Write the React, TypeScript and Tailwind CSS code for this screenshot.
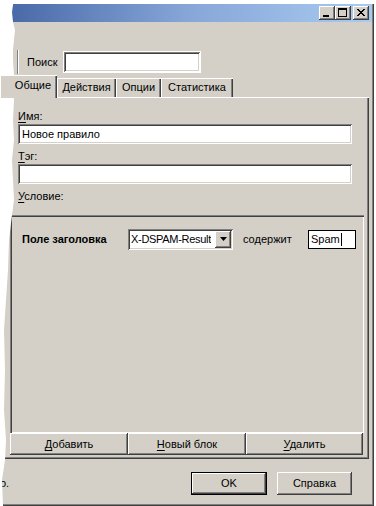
const raised =
  "shadow-[inset_-1px_-1px_#404040,inset_1px_1px_#ffffff,inset_-2px_-2px_#808080]";
const sunken =
  "shadow-[inset_1px_1px_#808080,inset_-1px_-1px_#ffffff,inset_2px_2px_#404040,inset_-2px_-2px_#d4d0c8]";

const CapButton = ({ children }: { children: React.ReactNode }) => (
  <div className={`w-[16px] h-[14px] bg-[#d4d0c8] flex items-center justify-center ${raised}`}>
    {children}
  </div>
);

const Tab = ({ label, w, active }: { label: string; w: string; active?: boolean }) => (
  <div
    className={
      active
        ? `relative z-10 -mb-[1px] h-[23px] ${w} bg-[#d4d0c8] flex items-center justify-end pr-[6px] pb-[2px] shadow-[inset_1px_1px_#ffffff,inset_-1px_0_#404040,inset_-2px_0_#808080]`
        : `h-[19px] ${w} bg-[#d4d0c8] flex items-center justify-center shadow-[inset_1px_1px_#ffffff,inset_-1px_0_#404040,inset_-2px_0_#808080]`
    }
  >
    {label}
  </div>
);

const Label = ({ first, rest }: { first: string; rest: string }) => (
  <div className="h-[13px] leading-[13px] ml-[18px]">
    <span className="underline underline-offset-2">{first}</span>
    {rest}
  </div>
);

const BarButton = ({ first, rest, w }: { first: string; rest: string; w: string }) => (
  <div className={`h-[22px] ${w} bg-[#d4d0c8] flex items-center justify-center ${raised}`}>
    <span>
      <span className="underline underline-offset-2">{first}</span>
      {rest}
    </span>
  </div>
);

export default function App() {
  return (
    <div className="relative w-[376px] h-[506px] bg-white overflow-hidden font-['Liberation_Sans',sans-serif] text-[11px] text-black">
      <div className="mt-[4px] w-[374px] h-[502px] bg-[#d4d0c8] flex flex-col shadow-[inset_-1px_-1px_#404040,inset_-2px_-2px_#808080]">
        {/* title bar */}
        <div className="h-[18px] w-[372px] bg-gradient-to-r from-[#4566a4] via-[#86a6d8] to-[#a8cbf0] flex items-center justify-end pr-[3px]">
          <CapButton>
            <svg width="16" height="14" viewBox="0 0 16 14">
              <rect x="4" y="9" width="6" height="2" fill="#000" />
            </svg>
          </CapButton>
          <CapButton>
            <svg width="16" height="14" viewBox="0 0 16 14">
              <rect x="3.5" y="2.5" width="8" height="8" fill="none" stroke="#000" />
              <rect x="3" y="2" width="9" height="2" fill="#000" />
            </svg>
          </CapButton>
          <div className="ml-[2px]">
            <CapButton>
              <svg width="16" height="14" viewBox="0 0 16 14">
                <path d="M4 3 L11 10 M5 3 L12 10 M11 3 L4 10 M12 3 L5 10" stroke="#000" strokeWidth="1" />
              </svg>
            </CapButton>
          </div>
        </div>

        {/* toolbar */}
        <div className="mt-[28px] h-[24px] flex items-center">
          <div className="ml-[17px] w-[2px] h-[24px] border-l border-r border-l-[#808080] border-r-white" />
          <span className="ml-[8px]">Поиск</span>
          <div className="ml-[6px] w-[138px] h-[22px] bg-white border border-white">
            <div className={`w-full h-full bg-white ${sunken}`} />
          </div>
        </div>

        {/* tabs */}
        <div className="mt-[1px] h-[22px] flex items-end">
          <Tab label="Общие" w="w-[57px]" active />
          <Tab label="Действия" w="w-[59px]" />
          <Tab label="Опции" w="w-[45px]" />
          <Tab label="Статистика" w="w-[72px]" />
        </div>

        {/* tab panel */}
        <div className="w-[369px] h-[362px] flex flex-col shadow-[inset_0_1px_#ffffff,inset_-1px_-1px_#404040,inset_-2px_-2px_#808080]">
          <div className="mt-[13px]">
            <Label first="И" rest="мя:" />
          </div>
          <div className={`mt-[1px] ml-[18px] w-[334px] h-[20px] bg-white flex items-center pl-[4px] ${sunken}`}>
            Новое правило
          </div>
          <div className="mt-[6px]">
            <Label first="Т" rest="эг:" />
          </div>
          <div className={`mt-[1px] ml-[18px] w-[334px] h-[20px] bg-white ${sunken}`} />
          <div className="mt-[6px]">
            <Label first="У" rest="словие:" />
          </div>

          <div className="mt-[12px] ml-[10px] w-[354px] h-[218px] shadow-[inset_1px_1px_#808080,inset_2px_2px_#404040,inset_-1px_-1px_#ffffff]">
            <div className="mt-[13px] h-[22px] flex items-center">
              <span className="ml-[12px] w-[106px] font-bold whitespace-nowrap">Поле заголовка</span>
              <div className={`w-[105px] h-[21px] bg-white flex items-center justify-between pl-[3px] pr-[2px] ${sunken}`}>
                <span className="whitespace-nowrap tracking-[-0.3px] overflow-hidden">X-DSPAM-Result</span>
                <div className={`shrink-0 w-[16px] h-[17px] bg-[#d4d0c8] flex items-center justify-center ${raised}`}>
                  <svg width="7" height="4" viewBox="0 0 7 4">
                    <path d="M0 0 H7 L3.5 4 Z" fill="#000" />
                  </svg>
                </div>
              </div>
              <span className="ml-[10px] w-[65px]">содержит</span>
              <div className="w-[48px] h-[19px] bg-white border border-black flex items-center pl-[2px]">
                Spam<span className="ml-[1px] w-[1px] h-[13px] bg-black" />
              </div>
            </div>
          </div>

          <div className="ml-[10px] flex">
            <BarButton first="Д" rest="обавить" w="w-[118px]" />
            <BarButton first="Н" rest="овый блок" w="w-[118px]" />
            <BarButton first="У" rest="далить" w="w-[117px]" />
          </div>
        </div>

        {/* bottom buttons */}
        <div className="mt-[13px] h-[23px] flex items-center">
          <span className="w-[191px]">о.</span>
          <div className="w-[76px] h-[23px] border border-black">
            <div className={`w-full h-full bg-[#d4d0c8] flex items-center justify-center ${raised}`}>OK</div>
          </div>
          <div className={`ml-[10px] w-[75px] h-[23px] bg-[#d4d0c8] flex items-center justify-center ${raised}`}>
            Справка
          </div>
        </div>
      </div>

      {/* torn left edge */}
      <svg className="absolute left-0 top-0" width="20" height="506" viewBox="0 0 20 506">
        <polygon
          fill="#ffffff"
          points="0,0 14,0 13,5 12,12 13,22 15,30 14,40 13,50 13,60 14,75 13,90 14,100 13,120 14,140 12,160 13,180 14,200 12,215 9,240 8,270 6,300 4,330 5,370 4,410 6,440 5,460 2,480 3,506 0,506"
        />
      </svg>
    </div>
  );
}
